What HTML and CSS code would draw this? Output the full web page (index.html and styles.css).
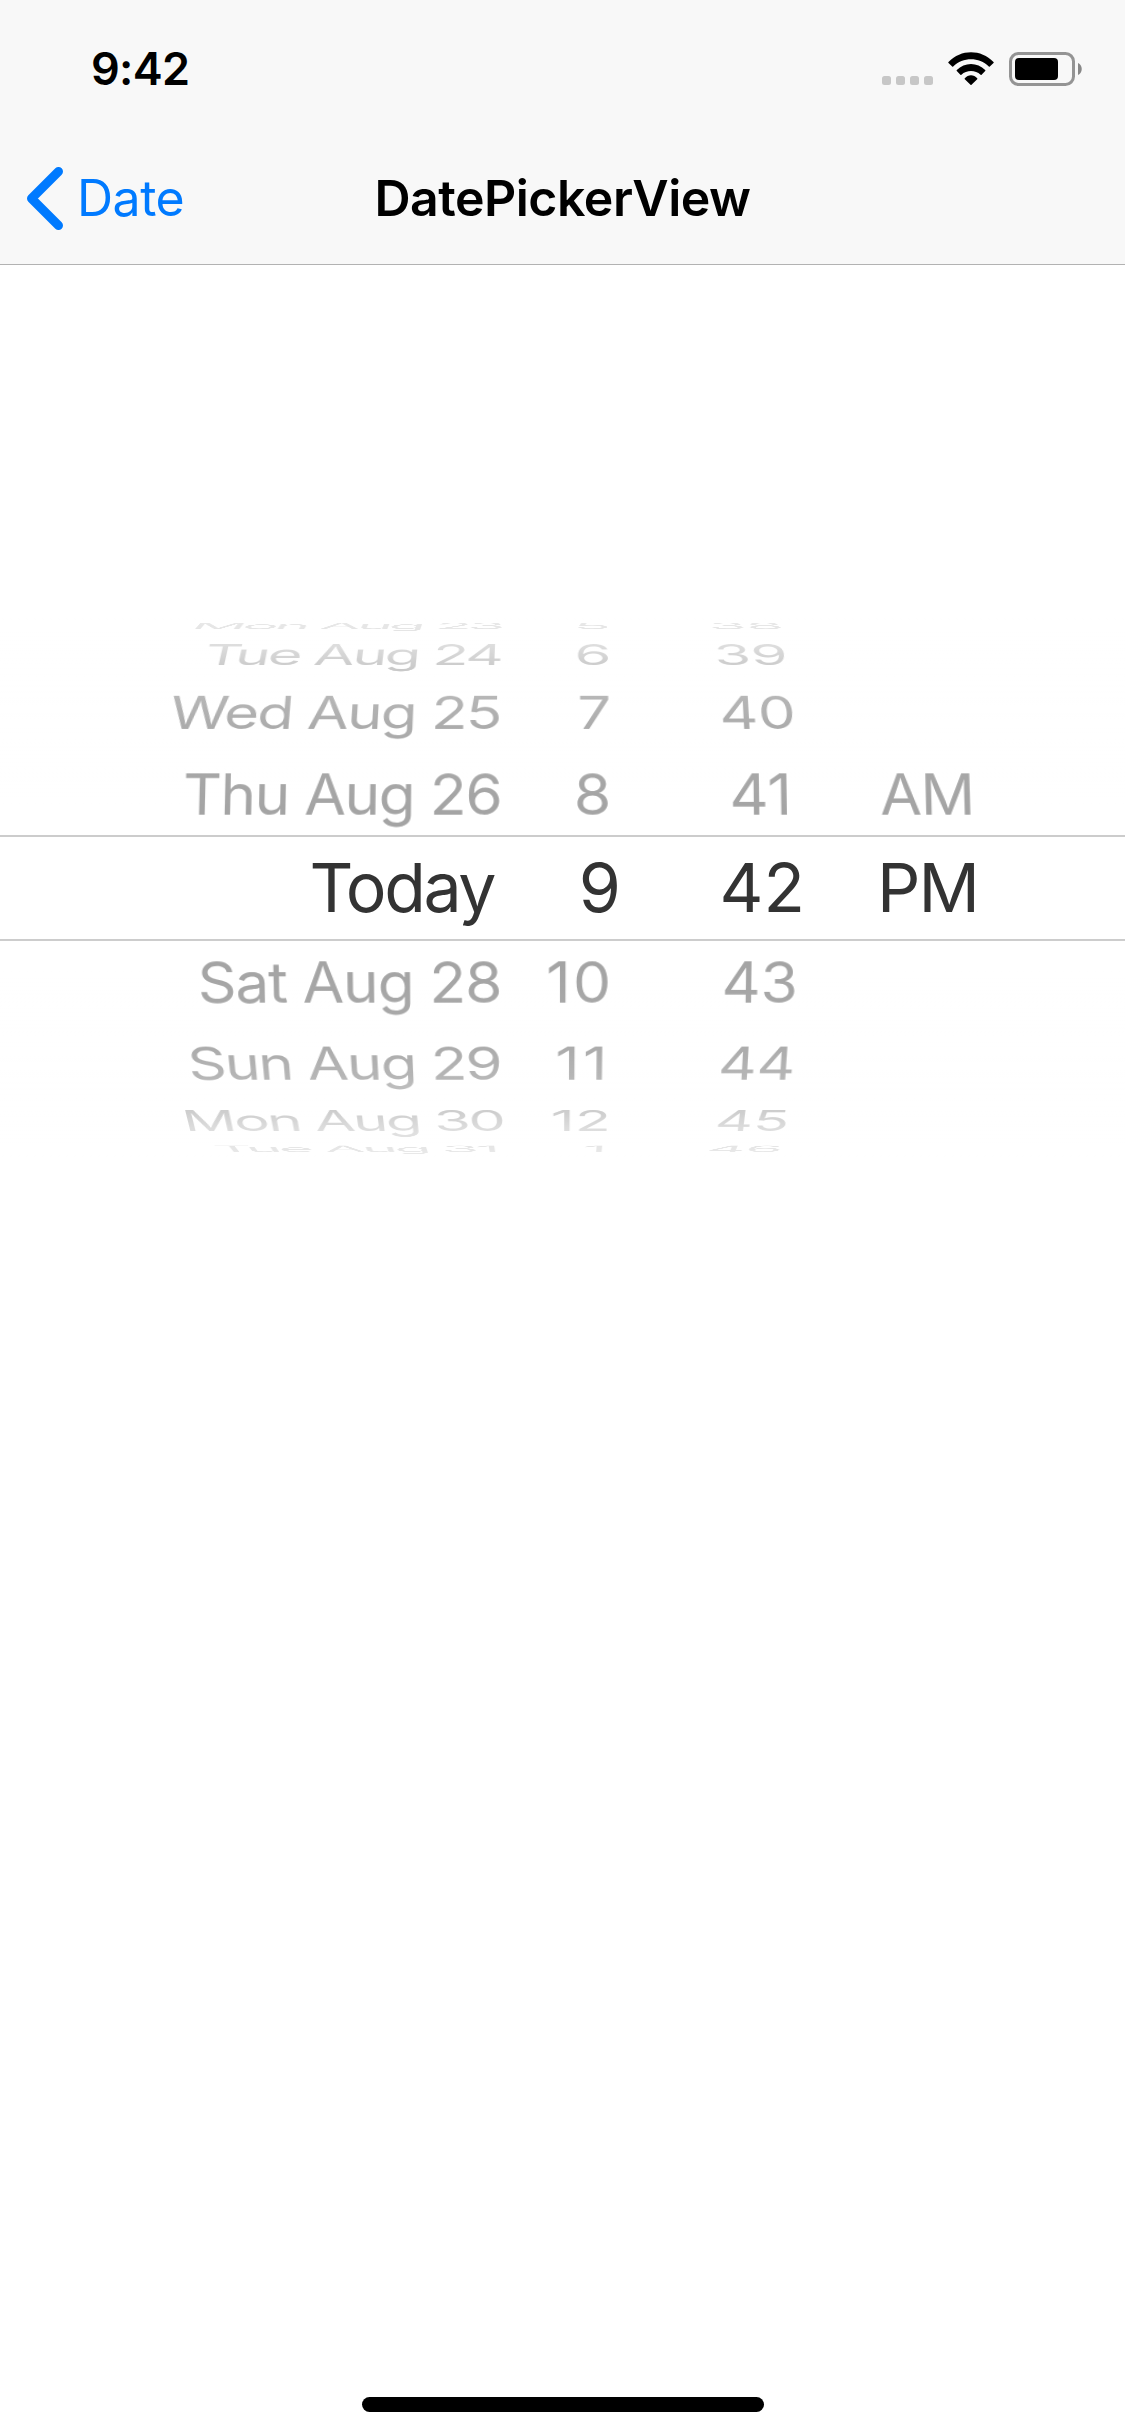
FILE: index.html
```html
<!DOCTYPE html>
<html lang="en">

<head>
    <meta charset="UTF-8">
    <meta name="viewport" content="width=device-width, initial-scale=1.0">
    <title>DatePickerView</title>
    <link rel="stylesheet" href="styles.css">
</head>

<body>
    <header class="header">
        <div class="status-bar">
            <span class="time">9:42</span>
            <div class="status-icons">
                <svg class="signal" width="51" height="9" viewBox="0 0 51 9" fill="#c7c7c7">
                    <rect width="9" height="9" rx="2.5" />
                    <rect x="14" width="9" height="9" rx="2.5" />
                    <rect x="28" width="9" height="9" rx="2.5" />
                    <rect x="42" width="9" height="9" rx="2.5" />
                </svg>
                <svg class="wifi" width="46" height="34" viewBox="0 0 46 34">
                    <path d="M.5 10C13-3 33-3 45.500 10Q46 10.500 45.500 11L41.800 14.500Q41.300 15 40.800 14.500C31 4.800 15 4.800 5.200 14.500Q4.700 15 4.200 14.500L.5 11Q0 10.500.5 10Z" />
                    <path d="M8.800 18.100C16.600 9.800 29.400 9.800 37.200 18.100Q37.700 18.600 37.200 19.100L33.600 22.700Q33.100 23.200 32.600 22.700C27.300 17.700 18.700 17.700 13.400 22.700Q12.900 23.200 12.400 22.700L8.800 19.100Q8.300 18.600 8.800 18.100Z" />
                    <path d="M16.800 26.200C20.200 22.200 25.800 22.200 29.200 26.200Q29.700 26.700 29.200 27.200L23.500 32.800Q23 33.300 22.500 32.800L16.800 27.200Q16.300 26.700 16.800 26.200Z" />
                </svg>
                <svg class="battery" width="73" height="34" viewBox="0 0 73 34">
                    <rect x="1.500" y="1.500" width="63" height="31" rx="8" fill="none" stroke="#949494" stroke-width="3" />
                    <rect x="6" y="6" width="43" height="22" rx="4" />
                    <path d="M69 11C74 13 74 21 69 23Z" fill="#888" />
                </svg>
            </div>
        </div>
        <nav class="nav-bar">
            <a class="back">
                <svg width="37" height="64" viewBox="0 0 37 64" fill="none" stroke="#007aff" stroke-width="9" stroke-linecap="round" stroke-linejoin="round">
                    <path d="M32.500 5.500L5.500 32.500L32.500 59.500" />
                </svg>
                <span>Date</span>
            </a>
            <h1 class="title">DatePickerView</h1>
        </nav>
    </header>

    <main>
        <div class="picker">
            <div class="row up-4">
                <span class="date">Mon Aug 23</span>
                <span class="hour">5</span>
                <span class="minute">38</span>
            </div>
            <div class="row up-3">
                <span class="date">Tue Aug 24</span>
                <span class="hour">6</span>
                <span class="minute">39</span>
            </div>
            <div class="row up-2">
                <span class="date">Wed Aug 25</span>
                <span class="hour">7</span>
                <span class="minute">40</span>
            </div>
            <div class="row up-1">
                <span class="date">Thu Aug 26</span>
                <span class="hour">8</span>
                <span class="minute">41</span>
                <span class="period">AM</span>
            </div>
            <div class="row selected">
                <span class="date">Today</span>
                <span class="hour">9</span>
                <span class="minute">42</span>
                <span class="period">PM</span>
            </div>
            <div class="row down-1">
                <span class="date">Sat Aug 28</span>
                <span class="hour">10</span>
                <span class="minute">43</span>
            </div>
            <div class="row down-2">
                <span class="date">Sun Aug 29</span>
                <span class="hour">11</span>
                <span class="minute">44</span>
            </div>
            <div class="row down-3">
                <span class="date">Mon Aug 30</span>
                <span class="hour">12</span>
                <span class="minute">45</span>
            </div>
            <div class="row down-4">
                <span class="date">Tue Aug 31</span>
                <span class="hour">1</span>
                <span class="minute">46</span>
            </div>
        </div>
    </main>

    <div class="home-indicator"></div>
</body>

</html>
```
FILE: styles.css
```css
* {
    box-sizing: border-box;
}

body {
    margin: 0;
    height: 2436px;
    display: flex;
    flex-direction: column;
    background-color: #fff;
    color: #000;
    font-family: Inter, "Liberation Sans", sans-serif;
    overflow: hidden;
}

.header {
    height: 265px;
    background-color: #f8f8f8;
    border-bottom: 1px solid #b2b2b2;
}

/* status bar */
.status-bar {
    height: 132px;
    padding: 5px 43px 0 91px;
    display: flex;
    justify-content: space-between;
    align-items: center;
}

.time {
    font-size: 45px;
    font-weight: 600;
    letter-spacing: -0.7px;
}

.status-icons {
    display: flex;
    align-items: flex-end;
    gap: 15px;
}

.signal {
    margin-bottom: 1px;
}

/* nav bar */
.nav-bar {
    height: 132px;
    padding: 0 26px;
    display: grid;
    grid-template-columns: 1fr auto 1fr;
    align-items: center;
}

.back {
    display: flex;
    align-items: center;
    gap: 14px;
    color: #007aff;
    font-size: 50px;
    letter-spacing: -0.5px;
}

.title {
    margin: 0;
    font-size: 50px;
    font-weight: 600;
    letter-spacing: -0.5px;
}

/* picker wheel */
.picker {
    position: relative;
    margin-top: 351px;
}

.row {
    display: grid;
    grid-template-columns: 503px 108px 187px 327px;
    height: var(--height);
    line-height: var(--height);
    font-size: 57px;
    color: #a3a3a3;
    perspective: 2600px;
    white-space: nowrap;
}

.row span {
    justify-self: end;
    transform: rotateX(var(--angle)) scaleX(var(--stretch));
    transform-origin: right center;
}

.row .date {
    padding-right: 2px;
    letter-spacing: var(--tracking);
}

.row .minute {
    margin-right: var(--shift);
}

.row .period {
    justify-self: start;
    margin-left: 82px;
    transform-origin: left center;
}

.up-4 {
    --height: 20px;
    --angle: 81deg;
    --stretch: 1.06;
    --tracking: -3.8px;
    --shift: 15px;
}

.up-3 {
    --height: 38px;
    --angle: 60deg;
    --stretch: 1.04;
    --tracking: -2.5px;
    --shift: 10px;
}

.up-2 {
    --height: 78px;
    --angle: 38deg;
    --stretch: 1.05;
    --tracking: -1.6px;
    --shift: 2px;
}

.up-1 {
    --height: 83px;
    --angle: 10deg;
    --stretch: 1.06;
    --tracking: -1.4px;
    --shift: 6px;
}

.up-1 span {
    padding-top: 1px;
}

.up-1 .period {
    letter-spacing: -1px;
}

.row.selected {
    --height: 100px;
    --tracking: -2.4px;
    --shift: -7px;
    height: 106px;
    border-top: 2px solid #ccc;
    border-bottom: 2px solid #ccc;
    color: #333;
    font-size: 68px;
}

.selected span {
    transform: none;
}

.selected .date {
    padding-right: 9px;
}

.selected .hour {
    margin-right: -10px;
}

.selected .period {
    margin-left: 79px;
    letter-spacing: -2px;
}

.down-1 {
    --height: 84px;
    --angle: -10deg;
    --stretch: 1.06;
    --tracking: -1.1px;
    --shift: 0px;
}

.down-2 {
    --height: 78px;
    --angle: -38deg;
    --stretch: 1.05;
    --tracking: -1.6px;
    --shift: 2px;
}

.down-1 .hour {
    letter-spacing: 2px;
    margin-right: -2px;
}

.down-2 .hour {
    letter-spacing: 3px;
    margin-right: 1px;
}

.down-3 {
    --height: 36px;
    --angle: -60deg;
    --stretch: 1.04;
    --tracking: -2.2px;
    --shift: 9px;
}

.row.down-3 .date {
    padding-right: 0;
    margin-right: -1px;
}

.down-4 {
    --height: 20px;
    --angle: -81deg;
    --stretch: 1.06;
    --tracking: -3.2px;
    --shift: 15px;
}

.row.down-4 .date {
    padding-right: 6px;
}

.down-4 .hour {
    margin-right: 4px;
}

/* fade at both ends of the wheel */
.picker::before,
.picker::after {
    content: "";
    position: absolute;
    left: 0;
    right: 0;
    height: 219px;
    background-image: linear-gradient(to bottom, rgba(255, 255, 255, .78), rgba(255, 255, 255, .64) 29px, rgba(255, 255, 255, .45) 49px, rgba(255, 255, 255, .2) 84px, rgba(255, 255, 255, .1) 111px, rgba(255, 255, 255, .02) 190px);
    z-index: 1;
}

.picker::before {
    top: 0;
}

.picker::after {
    bottom: 0;
    transform: scaleY(-1);
}

.home-indicator {
    width: 402px;
    height: 15px;
    margin: auto auto 24px;
    border-radius: 8px;
    background-color: #000;
}
```
